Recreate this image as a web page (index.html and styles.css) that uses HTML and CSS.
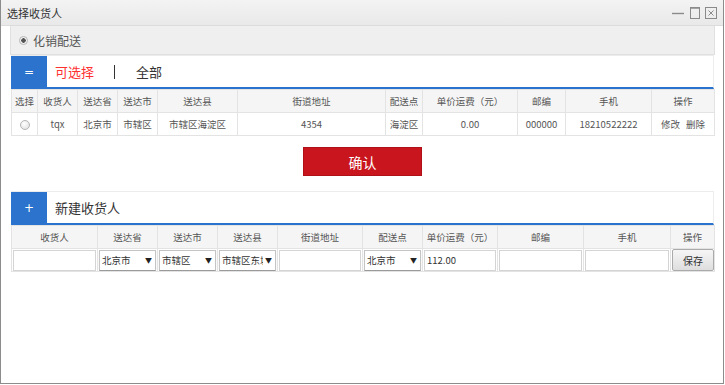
FILE: index.html
```html
<!DOCTYPE html>
<html lang="zh-CN">
<head>
  <meta charset="UTF-8">
  <meta name="viewport" content="width=device-width, initial-scale=1.0">
  <title>选择收货人</title>

  <link rel="stylesheet" href="styles.css">
</head>
<body>
  <div class="window">
    <div class="titlebar">
      <span class="title">选择收货人</span>
      <div class="controls">
        <svg width="14" height="14" viewBox="0 0 14 14"><line x1="1" y1="7.5" x2="13" y2="7.5" stroke="#8a8a8a" stroke-width="1.4"/></svg>
        <svg width="12" height="14" viewBox="0 0 12 14"><rect x="1.5" y="1.5" width="9" height="11" fill="none" stroke="#8a8a8a"/><line x1="1.5" y1="2" x2="10.5" y2="2" stroke="#8a8a8a" stroke-width="1.5"/></svg>
        <svg width="12" height="14" viewBox="0 0 12 14"><rect x="0.5" y="1.5" width="11" height="11" fill="none" stroke="#8a8a8a"/><path d="M3.5 4.5 L8.5 9.5 M8.5 4.5 L3.5 9.5" stroke="#8a8a8a" stroke-width="1"/></svg>
      </div>
    </div>

    <div class="content">
      <div class="type-row">
        <span class="radio checked"></span>
        <span>化销配送</span>
      </div>

      <!-- 可选择的收货人 -->
      <div class="section-head">
        <span class="head-icon">=</span>
        <span class="tab active">可选择</span>
        <span class="sep"></span>
        <span class="tab">全部</span>
      </div>
      <table class="grid">
        <colgroup>
          <col style="width:26px"><col style="width:40px"><col style="width:40px"><col style="width:40px">
          <col style="width:80px"><col style="width:148px"><col style="width:37px"><col style="width:95px">
          <col style="width:48px"><col style="width:86px"><col style="width:63px">
        </colgroup>
        <thead>
          <tr>
            <th>选择</th><th>收货人</th><th>送达省</th><th>送达市</th><th>送达县</th><th>街道地址</th>
            <th>配送点</th><th>单价运费（元）</th><th>邮编</th><th>手机</th><th>操作</th>
          </tr>
        </thead>
        <tbody>
          <tr>
            <td><span class="radio"></span></td>
            <td>tqx</td><td>北京市</td><td>市辖区</td><td>市辖区海淀区</td><td>4354</td>
            <td>海淀区</td><td>0.00</td><td>000000</td><td>18210522222</td>
            <td><a class="op">修改</a> <a class="op">删除</a></td>
          </tr>
        </tbody>
      </table>

      <div class="confirm-wrap">
        <button class="confirm">确认</button>
      </div>

      <!-- 新建收货人 -->
      <div class="section-head">
        <span class="head-icon">+</span>
        <span class="tab">新建收货人</span>
      </div>
      <table class="grid form">
        <colgroup>
          <col style="width:86px"><col style="width:60px"><col style="width:60px"><col style="width:60px">
          <col style="width:85px"><col style="width:60px"><col style="width:75px"><col style="width:86px">
          <col style="width:87px"><col style="width:44px">
        </colgroup>
        <thead>
          <tr>
            <th>收货人</th><th>送达省</th><th>送达市</th><th>送达县</th><th>街道地址</th>
            <th>配送点</th><th>单价运费（元）</th><th>邮编</th><th>手机</th><th>操作</th>
          </tr>
        </thead>
        <tbody>
          <tr>
            <td><input class="field" type="text"></td>
            <td><div class="select"><span>北京市</span><i>▼</i></div></td>
            <td><div class="select"><span>市辖区</span><i>▼</i></div></td>
            <td><div class="select"><span>市辖区东城区</span><i>▼</i></div></td>
            <td><input class="field" type="text"></td>
            <td><div class="select"><span>北京市</span><i>▼</i></div></td>
            <td><input class="field" type="text" value="112.00"></td>
            <td><input class="field" type="text"></td>
            <td><input class="field" type="text"></td>
            <td><button class="save">保存</button></td>
          </tr>
        </tbody>
      </table>
    </div>
  </div>
</body>
</html>
```

FILE: styles.css
```css
* {
  margin: 0;
  padding: 0;
  box-sizing: border-box;
}

body {
  background-color: #ffffff;
  font-family: 'Noto Sans CJK SC', 'Noto Sans', sans-serif;
  color: #333;
}

/* Window frame */
.window {
  width: 724px;
  height: 384px;
  border: 1px solid #8c8c8c;
  border-top: none;
  background-color: #ffffff;
}

.titlebar {
  height: 26px;
  display: flex;
  align-items: center;
  justify-content: space-between;
  padding: 0 6px 0 6px;
  background: linear-gradient(#f3f3f3, #e9e9e9);
  border-bottom: 1px solid #dcdcdc;
}

.title {
  font-size: 11px;
  color: #333;
}

.controls {
  display: flex;
  align-items: center;
  gap: 4px;
}

.controls svg {
  display: block;
}

/* Content */
.content {
  padding: 0 8px 0 9px;
}

.type-row {
  height: 29px;
  display: flex;
  align-items: center;
  gap: 5px;
  padding-left: 8px;
  background-color: #efefef;
  border: 1px solid #e0e0e0;
  border-top: none;
  font-size: 12px;
  color: #555;
}

.radio {
  display: inline-block;
  width: 9px;
  height: 9px;
  border-radius: 50%;
  border: 1px solid #b5b5b5;
  background: radial-gradient(circle at 40% 35%, #ffffff, #dcdcdc);
  vertical-align: middle;
}

.radio.checked {
  background: radial-gradient(circle, #555 0, #555 2px, #f4f4f4 2.5px);
}

.section-head {
  height: 34px;
  margin: 0 1px;
  display: flex;
  align-items: center;
  border-top: 1px solid #ececec;
  border-right: 1px solid #ececec;
  border-bottom: 2px solid #2b73cc;
  background-color: #ffffff;
}

.head-icon {
  width: 36px;
  height: 100%;
  display: flex;
  align-items: center;
  justify-content: center;
  background-color: #2b73cc;
  color: #ffffff;
  font-family: 'DejaVu Sans', sans-serif;
  font-size: 12px;
  margin-right: 8px;
}

.tab {
  font-size: 13px;
  color: #333;
}

.tab.active {
  color: #ff3030;
}

.sep {
  width: 1px;
  height: 14px;
  margin: 1px 21px 0 20px;
  background-color: #333;
}

/* Tables */
.grid {
  width: 704px;
  margin-left: 1px;
  border-collapse: collapse;
  table-layout: fixed;
  font-size: 9.5px;
  color: #555;
}

.grid th,
.grid td {
  height: 23px;
  border: 1px solid #e3e3e3;
  text-align: center;
  font-weight: normal;
  white-space: nowrap;
  overflow: hidden;
}

.grid th {
  background-color: #f5f5f5;
}

.grid td {
  background-color: #ffffff;
}

.grid .radio {
  width: 10px;
  height: 10px;
}

.op {
  color: #555;
  margin: 0 2px;
}

.confirm-wrap {
  display: flex;
  justify-content: center;
  padding: 11px 0 15px 0;
}

.confirm {
  width: 119px;
  height: 29px;
  border: 1px solid #b01018;
  background-color: #c9151e;
  color: #ffffff;
  font-family: inherit;
  font-size: 14px;
}

/* New receiver form */
.form td {
  padding: 0 1px;
}

.field {
  display: block;
  width: 100%;
  height: 21px;
  border: 1px solid #d4d4d4;
  padding: 0 2px;
  font-family: inherit;
  font-size: 9.5px;
  color: #333;
  outline: none;
}

.select {
  height: 21px;
  display: flex;
  align-items: center;
  gap: 2px;
  border: 1px solid #c4c4c4;
  border-bottom-color: #9a9a9a;
  box-shadow: 0 1px 1px rgba(0, 0, 0, 0.15);
  padding: 0 3px 0 2px;
  color: #333;
  overflow: hidden;
  text-align: left;
}

.select span {
  flex: 1;
  min-width: 0;
  overflow: hidden;
  white-space: nowrap;
}

.select i {
  font-style: normal;
  font-size: 7px;
  flex-shrink: 0;
  color: #222;
}

.save {
  display: block;
  width: 42px;
  height: 22px;
  border: 1px solid #aaaaaa;
  border-radius: 2px;
  background: linear-gradient(#f6f6f6, #dedede);
  font-family: inherit;
  font-size: 10px;
  color: #333;
}
```
